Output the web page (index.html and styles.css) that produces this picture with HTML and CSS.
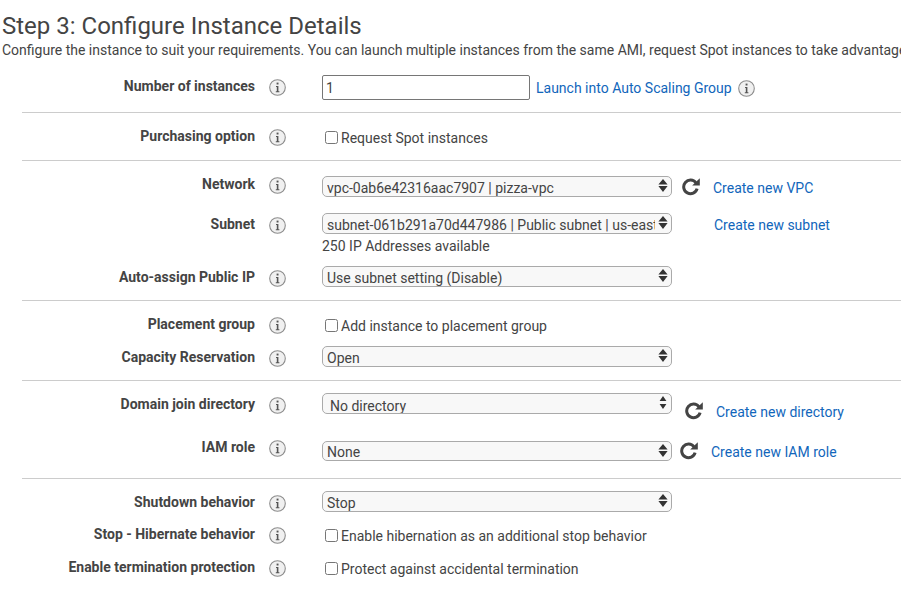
FILE: index.html
```html
<!DOCTYPE html>
<html lang="en">
<head>
    <meta charset="UTF-8">
    <title>Step 3: Configure Instance Details</title>
    <link rel="stylesheet" href="styles.css">
</head>
<body>
    <svg class="defs" width="0" height="0">
        <symbol id="info" viewBox="0 0 17 17">
            <circle cx="8.5" cy="8.5" r="7.8" fill="#f0f0f0" stroke="#8c8c8c" stroke-width="1.1"/>
            <rect x="7.6" y="3.6" width="1.9" height="1.9" fill="#555"/>
            <path d="M7 7h2.4v5.2h1v1H6.8v-1h1V8H7z" fill="#555"/>
        </symbol>
        <symbol id="refresh" viewBox="0 0 18 18">
            <path d="M14 4.9A6.8 6.8 0 1 0 15.1 10.6" fill="none" stroke="#444" stroke-width="3"/>
            <path d="M10.2 7.6h7.6V0.2z" fill="#444"/>
        </symbol>
        <symbol id="arrows" viewBox="0 0 10 13">
            <path d="M5 0l4.6 5.6H0.4zM0.4 7h9.2L5 13z" fill="#333"/>
        </symbol>
        <symbol id="arrows-narrow" viewBox="0 0 10 13">
            <path d="M5 0l3.4 5H1.6zM1.6 8h6.8L5 13z" fill="#333"/>
        </symbol>
    </svg>

    <h1>Step 3: Configure Instance Details</h1>
    <p class="intro">Configure the instance to suit your requirements. You can launch multiple instances from the same AMI, request Spot instances to take advantage of the lower pricing, assign an access management role to the instance, and more.</p>

    <div class="section s-count">
        <div class="row row-count">
            <div class="head"><label>Number of instances</label><svg class="info"><use href="#info"/></svg></div>
            <input class="count" type="text" value="1">
            <a class="link link-scaling" href="#">Launch into Auto Scaling Group</a>
            <svg class="info info-scaling"><use href="#info"/></svg>
        </div>
    </div>

    <div class="section s-purchase">
        <div class="row check-row">
            <div class="head lift"><label>Purchasing option</label><svg class="info"><use href="#info"/></svg></div>
            <label class="check"><input type="checkbox">Request Spot instances</label>
        </div>
    </div>

    <div class="section s-network">
        <div class="row">
            <div class="head lift"><label>Network</label><svg class="info"><use href="#info"/></svg></div>
            <div class="select"><select><option>vpc-0ab6e42316aac7907 | pizza-vpc</option></select><svg class="arrows"><use href="#arrows"/></svg></div>
            <svg class="refresh refresh-vpc"><use href="#refresh"/></svg>
            <a class="link link-vpc" href="#">Create new VPC</a>
        </div>
        <div class="row row-subnet">
            <div class="head"><label>Subnet</label><svg class="info"><use href="#info"/></svg></div>
            <div class="field">
                <div class="select"><select><option>subnet-061b291a70d447986 | Public subnet | us-east-1a</option></select><svg class="arrows"><use href="#arrows"/></svg></div>
                <div class="hint">250 IP Addresses available</div>
            </div>
            <a class="link link-subnet" href="#">Create new subnet</a>
        </div>
        <div class="row row-auto">
            <div class="head"><label>Auto-assign Public IP</label><svg class="info"><use href="#info"/></svg></div>
            <div class="select"><select><option>Use subnet setting (Disable)</option></select><svg class="arrows"><use href="#arrows"/></svg></div>
        </div>
    </div>

    <div class="section s-placement">
        <div class="row check-row">
            <div class="head lift"><label>Placement group</label><svg class="info"><use href="#info"/></svg></div>
            <label class="check"><input type="checkbox">Add instance to placement group</label>
        </div>
        <div class="row row-capacity">
            <div class="head"><label>Capacity Reservation</label><svg class="info"><use href="#info"/></svg></div>
            <div class="select"><select><option>Open</option></select><svg class="arrows"><use href="#arrows"/></svg></div>
        </div>
    </div>

    <div class="section s-domain">
        <div class="row">
            <div class="head"><label>Domain join directory</label><svg class="info"><use href="#info"/></svg></div>
            <div class="select select-domain"><select><option>No directory</option></select><svg class="arrows"><use href="#arrows-narrow"/></svg></div>
            <svg class="refresh refresh-domain"><use href="#refresh"/></svg>
            <a class="link link-domain" href="#">Create new directory</a>
        </div>
        <div class="row row-iam">
            <div class="head lift-more"><label>IAM role</label><svg class="info"><use href="#info"/></svg></div>
            <div class="select select-iam"><select><option>None</option></select><svg class="arrows"><use href="#arrows"/></svg></div>
            <svg class="refresh refresh-iam"><use href="#refresh"/></svg>
            <a class="link link-iam" href="#">Create new IAM role</a>
        </div>
    </div>

    <div class="section s-shutdown">
        <div class="row">
            <div class="head"><label>Shutdown behavior</label><svg class="info"><use href="#info"/></svg></div>
            <div class="select"><select><option>Stop</option></select><svg class="arrows"><use href="#arrows"/></svg></div>
        </div>
        <div class="row check-row row-hibernate">
            <div class="head lift"><label>Stop - Hibernate behavior</label><svg class="info"><use href="#info"/></svg></div>
            <label class="check"><input type="checkbox">Enable hibernation as an additional stop behavior</label>
        </div>
        <div class="row check-row row-terminate">
            <div class="head lift"><label>Enable termination protection</label><svg class="info"><use href="#info"/></svg></div>
            <label class="check"><input type="checkbox">Protect against accidental termination</label>
        </div>
    </div>
</body>
</html>
```

FILE: styles.css
```css
html, body {
    height: 100%;
    overflow: hidden;
}
body {
    margin: 0;
    background: #fff;
    color: #444;
    font-family: Roboto, "Liberation Sans", sans-serif;
    font-size: 14px;
    line-height: 20px;
}
.defs {
    display: block;
    height: 0;
}
h1 {
    margin: 0;
    padding: 12px 0 0 2px;
    font-size: 24px;
    font-weight: 400;
    line-height: 28px;
    white-space: nowrap;
}
.intro {
    margin: 0;
    padding-left: 2px;
    height: 20px;
    white-space: nowrap;
}
.section {
    margin-left: 22px;
    border-bottom: 1px solid #ccc;
}
.s-count { padding: 15px 0 12px; }
.s-purchase { padding: 15px 0 12px; }
.s-network { padding: 15px 0 13px; }
.s-placement { padding: 15px 0 13px; }
.s-domain { padding: 12px 0 16px; }
.s-shutdown { padding: 12px 0 0; border-bottom: none; }

.row {
    display: flex;
    align-items: flex-start;
    height: 21px;
}
.row-count { height: 25px; }
.row-subnet { height: 43px; margin-top: 16px; }
.row-auto { margin-top: 10px; }
.row-capacity { margin-top: 10px; }
.row-iam { margin-top: 27px; }
.row-hibernate { margin-top: 14px; }
.row-terminate { margin-top: 13px; }

.head {
    display: flex;
    flex: none;
    width: 300px;
    margin-top: 1px;
}
.head.lift { margin-top: -2px; }
.head.lift-more { margin-top: -4px; }
.head label {
    width: 233px;
    font-weight: 700;
    text-align: right;
    white-space: nowrap;
}
.info {
    flex: none;
    width: 17px;
    height: 17px;
    margin: 3px 0 0 14px;
}
.count {
    box-sizing: border-box;
    width: 208px;
    height: 25px;
    padding: 1px 3px;
    border: 1px solid #767676;
    border-radius: 2px;
    color: #444;
    font: 14px Roboto, sans-serif;
}
.link {
    color: #16b;
    text-decoration: none;
    white-space: nowrap;
}
.link-scaling { margin: 3px 0 0 6px; }
.info-scaling { margin: 5px 0 0 6px; }
.link-vpc { margin: 2px 0 0 13px; }
.link-subnet { margin: 2px 0 0 42px; }
.link-domain { margin: 9px 0 0 13px; }
.link-iam { margin: 1px 0 0 13px; }

.select {
    position: relative;
    flex: none;
    width: 350px;
}
.select select {
    display: block;
    box-sizing: border-box;
    width: 100%;
    height: 21px;
    padding: 2px 16px 0 4px;
    border: 1px solid #aaa;
    border-radius: 5px;
    background: #f8f8f8;
    color: #444;
    font: 14px Roboto, sans-serif;
    appearance: none;
}
.select-domain select { padding-left: 7px; padding-top: 4px; }
.select-iam select { height: 20px; padding-top: 1px; }
.arrows {
    position: absolute;
    top: 3px;
    right: 4px;
    width: 10px;
    height: 13px;
}
.refresh {
    flex: none;
    width: 18px;
    height: 18px;
}
.refresh-vpc { margin: 2px 0 0 10px; }
.refresh-domain { margin: 9px 0 0 13px; }
.refresh-iam { margin: 1px 0 0 8px; }

.field { flex: none; width: 350px; }
.hint { margin-top: 2px; }

.check-row { height: 20px; }
.check {
    display: flex;
    align-items: center;
    height: 20px;
    white-space: nowrap;
}
.check input {
    width: 13px;
    height: 13px;
    margin: 0 3px 2px 3px;
}
```
